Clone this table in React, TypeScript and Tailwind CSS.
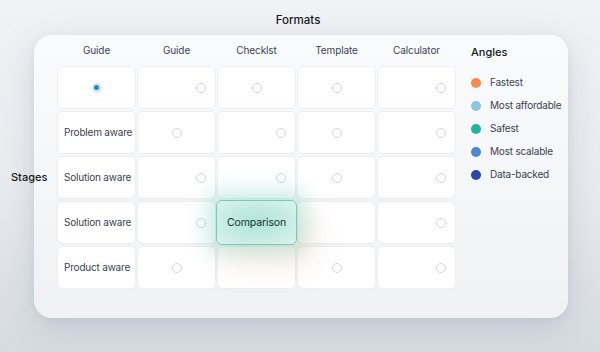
import React from "react";

type Cell = { kind: "c" | "r" | "none" | "sel" | "label" | "cmp"; text?: string };

const rows: Cell[][] = [
  [{ kind: "sel" }, { kind: "r" }, { kind: "c" }, { kind: "c" }, { kind: "r" }],
  [{ kind: "label", text: "Problem aware" }, { kind: "c" }, { kind: "r" }, { kind: "c" }, { kind: "r" }],
  [{ kind: "label", text: "Solution aware" }, { kind: "r" }, { kind: "r" }, { kind: "c" }, { kind: "r" }],
  [{ kind: "label", text: "Solution aware" }, { kind: "r" }, { kind: "cmp", text: "Comparison" }, { kind: "none" }, { kind: "r" }],
  [{ kind: "label", text: "Product aware" }, { kind: "c" }, { kind: "none" }, { kind: "c" }, { kind: "r" }],
];

const headers = ["Guide", "Guide", "Checklst", "Template", "Calculator"];

const angles = [
  { label: "Fastest", color: "bg-[#f58b4c]" },
  { label: "Most affordable", color: "bg-[#8ac5e2]" },
  { label: "Safest", color: "bg-[#22b2a0]" },
  { label: "Most scalable", color: "bg-[#4b87d1]" },
  { label: "Data-backed", color: "bg-[#2e45a8]" },
];

function Radio() {
  return <div className="w-[10px] h-[10px] rounded-full border border-[#d3d7dd] bg-white" />;
}

function GridCell({ cell }: { cell: Cell }) {
  if (cell.kind === "cmp") {
    return (
      <div className="relative z-10 -mx-px -my-px flex items-center justify-center whitespace-nowrap rounded-[6px] border border-[#6ccfbb] bg-[radial-gradient(ellipse_at_center,#ade5d9_0%,#c6ebe3_55%,#dcf3ee_100%)] text-[10.5px] tracking-[-0.01em] text-[#17302c] shadow-[0_0_22px_9px_rgba(80,200,175,0.3),12px_16px_26px_6px_rgba(250,185,140,0.22)]">
        {cell.text}
      </div>
    );
  }
  const base = "flex items-center rounded-[6px] border border-[#eceef1] bg-white";
  if (cell.kind === "label") {
    return <div className={`${base} whitespace-nowrap pl-[6px] text-[10px] tracking-[-0.02em] text-[#3b4250]`}>{cell.text}</div>;
  }
  if (cell.kind === "sel") {
    return (
      <div className={`${base} justify-center`}>
        <div className="w-[10px] h-[10px] rounded-full bg-[#d6e8f3] flex items-center justify-center">
          <div className="w-[5px] h-[5px] rounded-full bg-[#2585bf]" />
        </div>
      </div>
    );
  }
  if (cell.kind === "c") {
    return (
      <div className={`${base} justify-center`}>
        <Radio />
      </div>
    );
  }
  if (cell.kind === "r") {
    return (
      <div className={`${base} justify-end pr-[9px]`}>
        <Radio />
      </div>
    );
  }
  return <div className={base} />;
}

export default function App() {
  return (
    <div className="w-[600px] h-[352px] overflow-hidden bg-[linear-gradient(180deg,#f1f2f5_0%,#e7eaee_55%,#d6dbe1_100%)] font-['Inter',sans-serif]">
      <div className="h-[35px] flex items-center justify-center pt-[6px] pr-[4px] text-[11.5px] font-medium text-[#141821]">
        Formats
      </div>
      <div className="relative ml-[34px] w-[534px] h-[283px] rounded-[18px] bg-[linear-gradient(180deg,#fafbfc_0%,#f4f5f7_60%,#eff1f4_100%)] shadow-[0_10px_30px_rgba(150,160,175,0.35),0_2px_6px_rgba(150,160,175,0.15)] flex">
        <div className="absolute left-[-23px] top-[134px] h-[16px] flex items-center text-[11px] font-medium text-[#141821]">
          Stages
        </div>
        <div className="pl-[23px]">
          <div className="grid grid-cols-[repeat(5,79px)] gap-x-px h-[31px]">
            {headers.map((h, i) => (
              <div key={i} className="flex items-center justify-center whitespace-nowrap text-[10px] tracking-[-0.01em] text-[#3b4250]">
                {h}
              </div>
            ))}
          </div>
          <div className="grid grid-cols-[repeat(5,79px)] grid-rows-[repeat(5,43px)] gap-x-px gap-y-[2px]">
            {rows.map((r, ri) => r.map((c, ci) => <GridCell key={`${ri}-${ci}`} cell={c} />))}
          </div>
        </div>
        <div className="ml-[15px]">
          <div className="h-[31px] flex items-center pt-[3px] text-[11px] font-medium text-[#141821]">Angles</div>
          <div className="mt-[5px] flex flex-col">
            {angles.map((a) => (
              <div key={a.label} className="h-[23px] flex items-center">
                <div className={`w-[10px] h-[10px] rounded-full ${a.color}`} />
                <span className="ml-[9px] whitespace-nowrap text-[10px] tracking-[-0.02em] text-[#3b4250]">{a.label}</span>
              </div>
            ))}
          </div>
        </div>
      </div>
    </div>
  );
}
